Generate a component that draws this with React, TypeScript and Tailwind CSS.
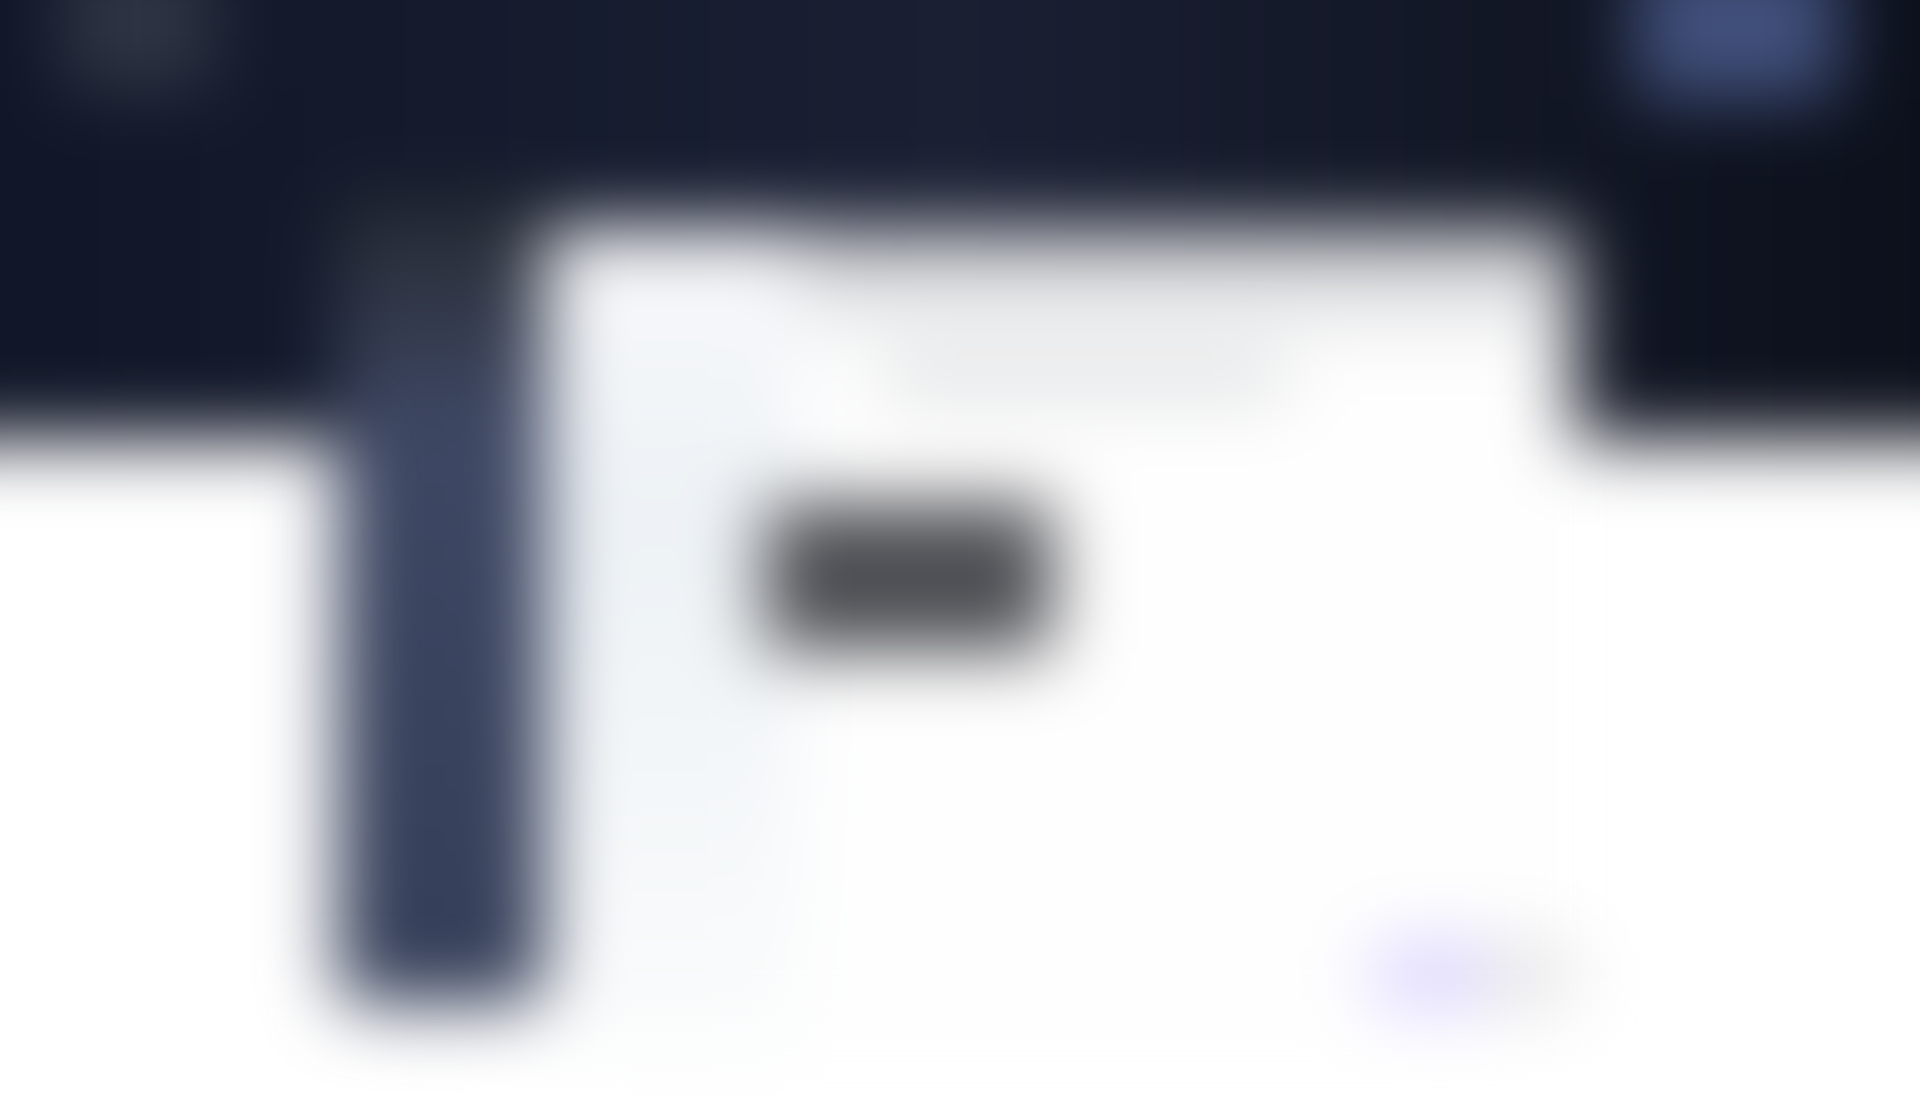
export default function App() {
  return (
    <div className="h-[1103px] w-full overflow-hidden bg-white">
      {/* whole page sits under a heavy blur, bleeds past the viewport so edges stay solid */}
      <div className="-ml-[160px] -mt-[160px] flex w-[2240px] flex-col blur-[36px]">
        <header className="h-[601px] bg-gradient-to-r from-[#0f1526] via-[#1a1f33] to-[#0a0e18] pl-[220px] pr-[240px] pt-[110px]">
          <div className="flex items-start justify-between">
            <div className="h-[140px] w-[155px] rounded-lg bg-[#2f3444]" />
            <div className="h-[150px] w-[205px] rounded-lg bg-[#41507c]" />
          </div>
        </header>
        <main className="-mt-[241px] flex pl-[497px]">
          <aside className="h-[805px] w-[208px] rounded-b-[28px] bg-gradient-to-b from-[#262a32] via-[#3e4763] via-[27%] to-[#343e58]" />
          <section className="mt-[27px] flex h-[830px] w-[1029px] rounded-t-lg bg-gradient-to-b from-[#bfc1c5] to-[#fefefe] to-[14%]">
            <div className="flex w-[265px] flex-col bg-gradient-to-b from-[#f8f9fb] via-[#edf2f6] via-[35%] to-[#fbfcfc]" />
            <div className="flex flex-1 flex-col">
              <div className="ml-[84px] mt-[133px] h-[34px] w-[405px] rounded bg-[#d6d8da]" />
              <div className="-ml-[32px] mt-[108px] h-[150px] w-[288px] rounded-lg bg-[#4c4d52]" />
              <div className="ml-[577px] mt-[293px] flex">
                <div className="h-[60px] w-[110px] shrink-0 rounded bg-[#d8d1ff]" />
                <div className="h-[60px] w-[90px] shrink-0 rounded bg-[#e4e4e4]" />
              </div>
            </div>
          </section>
        </main>
      </div>
    </div>
  );
}
